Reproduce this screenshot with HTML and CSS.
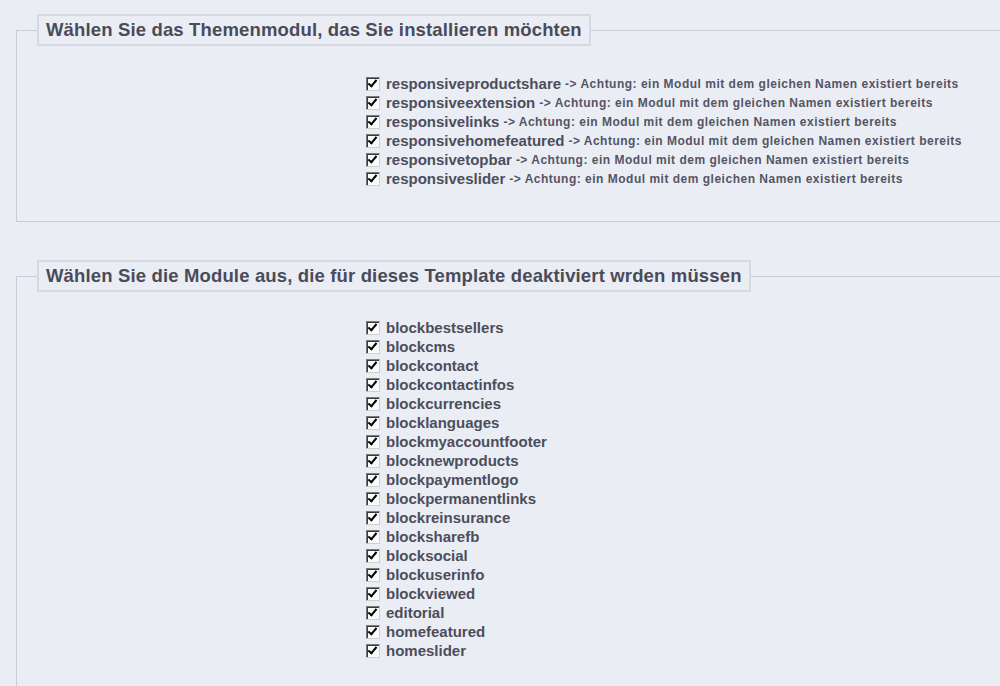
FILE: index.html
```html
<!DOCTYPE html>
<html lang="de">
<head>
    <meta charset="UTF-8">
    <title>Theme installieren</title>
    <link rel="stylesheet" href="styles.css">
</head>
<body>
    <fieldset class="panel">
        <legend>Wählen Sie das Themenmodul, das Sie installieren möchten</legend>
        <ul class="modules">
            <li><span class="cb"></span><b>responsiveproductshare</b> <small>-&gt; Achtung: ein Modul mit dem gleichen Namen existiert bereits</small></li>
            <li><span class="cb"></span><b>responsiveextension</b> <small>-&gt; Achtung: ein Modul mit dem gleichen Namen existiert bereits</small></li>
            <li><span class="cb"></span><b>responsivelinks</b> <small>-&gt; Achtung: ein Modul mit dem gleichen Namen existiert bereits</small></li>
            <li><span class="cb"></span><b>responsivehomefeatured</b> <small>-&gt; Achtung: ein Modul mit dem gleichen Namen existiert bereits</small></li>
            <li><span class="cb"></span><b>responsivetopbar</b> <small>-&gt; Achtung: ein Modul mit dem gleichen Namen existiert bereits</small></li>
            <li><span class="cb"></span><b>responsiveslider</b> <small>-&gt; Achtung: ein Modul mit dem gleichen Namen existiert bereits</small></li>
        </ul>
    </fieldset>

    <fieldset class="panel second">
        <legend>Wählen Sie die Module aus, die für dieses Template deaktiviert wrden müssen</legend>
        <ul class="modules">
            <li><span class="cb"></span><b>blockbestsellers</b></li>
            <li><span class="cb"></span><b>blockcms</b></li>
            <li><span class="cb"></span><b>blockcontact</b></li>
            <li><span class="cb"></span><b>blockcontactinfos</b></li>
            <li><span class="cb"></span><b>blockcurrencies</b></li>
            <li><span class="cb"></span><b>blocklanguages</b></li>
            <li><span class="cb"></span><b>blockmyaccountfooter</b></li>
            <li><span class="cb"></span><b>blocknewproducts</b></li>
            <li><span class="cb"></span><b>blockpaymentlogo</b></li>
            <li><span class="cb"></span><b>blockpermanentlinks</b></li>
            <li><span class="cb"></span><b>blockreinsurance</b></li>
            <li><span class="cb"></span><b>blocksharefb</b></li>
            <li><span class="cb"></span><b>blocksocial</b></li>
            <li><span class="cb"></span><b>blockuserinfo</b></li>
            <li><span class="cb"></span><b>blockviewed</b></li>
            <li><span class="cb"></span><b>editorial</b></li>
            <li><span class="cb"></span><b>homefeatured</b></li>
            <li><span class="cb"></span><b>homeslider</b></li>
        </ul>
    </fieldset>
</body>
</html>
```

FILE: styles.css
```css
html, body {
    height: 100%;
}
body {
    margin: 0;
    padding: 0;
    overflow: hidden;
    background-color: #ebedf4;
    font-family: "Liberation Sans", Arial, sans-serif;
    color: #4c4e5c;
}
.panel {
    width: 1000px;
    margin: 14px 0 0 16px;
    padding: 28px 0 33px 20px;
    border: 1px solid #c9ccd6;
    border-right: none;
}
.panel.second {
    margin-top: 38px;
    padding-top: 26px;
    border-bottom: none;
}
legend {
    padding: 5px 7px 5px 7px;
    border: 2px solid #d6d9e2;
    font-size: 18.5px;
    font-weight: bold;
    letter-spacing: 0.15px;
    line-height: 18px;
    color: #4a4b59;
}
.modules {
    list-style: none;
    margin: 0;
    padding: 0 0 0 329px;
}
.modules li {
    display: flex;
    align-items: center;
    height: 19px;
    white-space: nowrap;
}
.modules b {
    font-size: 15px;
    margin-left: 6px;
}
.modules small {
    font-size: 12px;
    font-weight: bold;
    letter-spacing: 0.5px;
    margin-left: 4px;
    color: #535565;
}
/* old style windows checkbox */
.cb {
    position: relative;
    box-sizing: border-box;
    width: 14px;
    height: 14px;
    flex: none;
    background: #fbfbfb;
    border-top: 1px solid #7a7a7a;
    border-left: 1px solid #7a7a7a;
    border-right: 1px solid #d0d0d0;
    border-bottom: 1px solid #d0d0d0;
    box-shadow: inset 1px 1px 0 #3a3a3a;
}
.cb::after {
    content: "";
    position: absolute;
    left: 3px;
    top: 0px;
    width: 3px;
    height: 7px;
    border-right: 2.5px solid #000;
    border-bottom: 2.5px solid #000;
    transform: rotate(40deg);
}
```
